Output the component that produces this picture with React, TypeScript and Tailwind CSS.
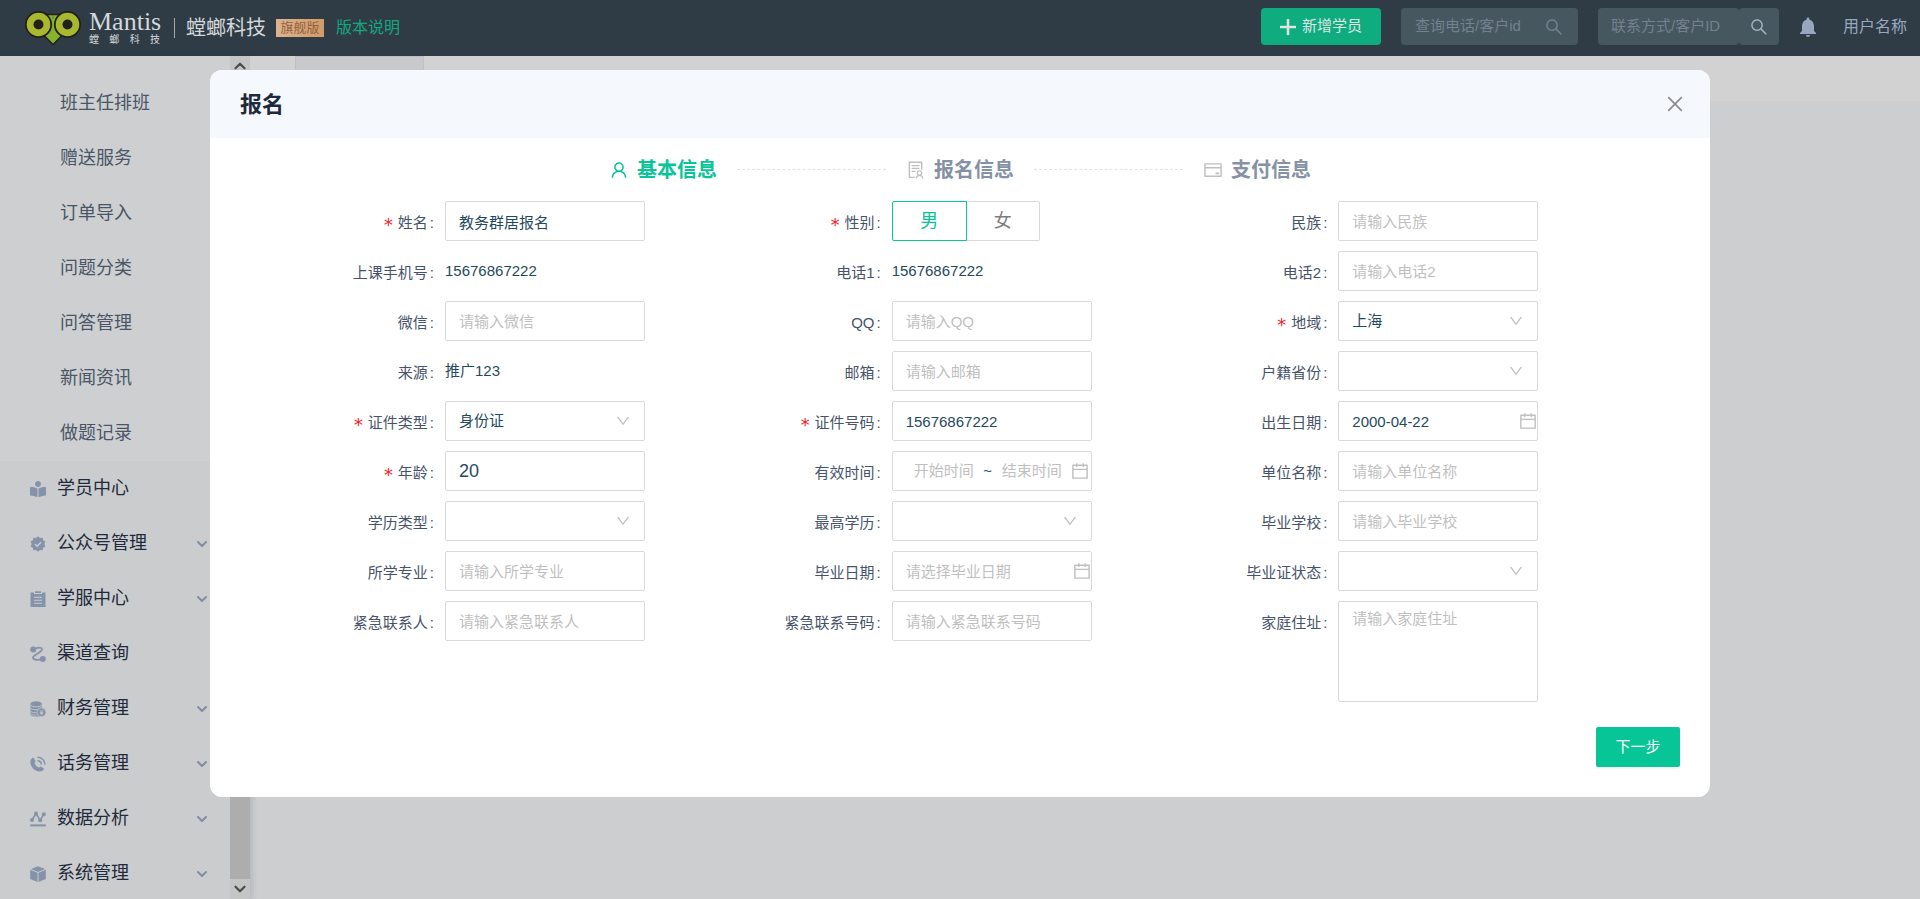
import { useState } from "react";
import type { ReactNode } from "react";
import {
  AiOutlineCalendar,
  AiOutlineClose,
  AiOutlineCreditCard,
  AiOutlineDown,
  AiOutlineSearch,
  AiOutlineSolution,
  AiOutlineUser,
} from "react-icons/ai";
import { FaBookReader } from "react-icons/fa";
import { MdNotifications } from "react-icons/md";
import { ChevronDown } from "lucide-react";

const subMenu = ["班主任排班", "赠送服务", "订单导入", "问题分类", "问答管理", "新闻资讯", "做题记录"];

const mainMenu: { label: string; icon: ReactNode; more: boolean }[] = [
  { label: "学员中心", icon: <FaBookReader className="h-4 w-4" />, more: false },
  { label: "公众号管理", icon: <BadgeIcon />, more: true },
  { label: "学服中心", icon: <ClipboardIcon />, more: true },
  { label: "渠道查询", icon: <RouteIcon />, more: false },
  { label: "财务管理", icon: <CoinsIcon />, more: true },
  { label: "话务管理", icon: <PhoneIcon />, more: true },
  { label: "数据分析", icon: <ChartIcon />, more: true },
  { label: "系统管理", icon: <CubeIcon />, more: true },
];

const boxClass =
  "h-10 w-[200px] rounded-xs border border-[#d9d9d9] bg-white px-[13px] text-[#1f4a5e] outline-none placeholder:text-[#bfbfbf]";

function BadgeIcon() {
  return (
    <svg viewBox="0 0 16 16" className="h-4 w-4" fill="currentColor">
      <path d="M8 .3l2 1.700 2.600-.3.500 2.500 2.300 1.300L14.400 8l1 2.500-2.300 1.300-.5 2.500-2.600-.3L8 15.700 6 14l-2.600.3-.5-2.500L.6 10.500 1.600 8 .6 5.500l2.300-1.300.5-2.500L6 2z" />
      <path d="M5 8l2.200 2.200L11 6.200" fill="none" stroke="#cacccd" strokeWidth="1.500" />
    </svg>
  );
}

function ClipboardIcon() {
  return (
    <svg viewBox="0 0 16 16" className="h-4 w-4" fill="currentColor">
      <path d="M.5 1.500H4V3h8V1.500h3.500V16H.5z" />
      <path d="M5 .3h6v1.700H5z" />
      <path d="M4 6.300h8M4 9.300h8M4 12.300h8" stroke="#cacccd" strokeWidth="1.100" />
    </svg>
  );
}

function RouteIcon() {
  return (
    <svg viewBox="0 0 16 16" className="h-4 w-4" fill="currentColor">
      <circle cx="3.200" cy="3.500" r="3" />
      <circle cx="12.800" cy="13" r="3" />
      <path d="M4 3.200C7 1.200 12 .8 12 3.500S3 9 3 11.500s5 3 9 1.500" fill="none" stroke="currentColor" strokeWidth="1.800" />
    </svg>
  );
}

function CoinsIcon() {
  return (
    <svg viewBox="0 0 16 16" className="h-4 w-4" fill="currentColor">
      <path d="M.5 2.800C.5 1.300 3 .3 6.200.3s5.600 1 5.600 2.500v12c-1 .8-9 1.300-11.300-.6z" />
      <path d="M.5 4.500c2 1.700 9.300 1.700 11.300 0M.5 7.500c2 1.500 7 1.600 8.500.5M.5 10.500c1.500 1.200 5 1.300 6 1M.5 13c1.500 1.200 5 1.300 6 1" fill="none" stroke="#cacccd" strokeWidth=".8" />
      <circle cx="11.500" cy="11.300" r="4.500" stroke="#cacccd" strokeWidth=".8" />
      <path d="M9.700 8.800l1.800 2.300 1.800-2.300M11.500 11v3M9.800 11.400h3.400M9.800 12.700h3.400" fill="none" stroke="#cacccd" strokeWidth=".8" />
    </svg>
  );
}

function PhoneIcon() {
  return (
    <svg viewBox="0 0 16 16" className="h-4 w-4" fill="currentColor">
      <path d="M3.300 1.500L5.600 5 4.500 6.900c.7 2 2.300 3.900 4.500 4.700l1.900-1.100 3.300 2.300c-1 1.900-2.600 2.800-4.600 2.700C4.500 15.200.6 11 .3 6c0-2 1-3.600 3-4.500z" />
      <path d="M7.500 4.700c2.200 0 3.800 1.600 3.800 3.800M7.500 1.200c4.200 0 7.300 3.100 7.300 7.300" fill="none" stroke="currentColor" strokeWidth="1.500" />
    </svg>
  );
}

function ChartIcon() {
  return (
    <svg viewBox="0 0 16 16" className="h-4 w-4" fill="currentColor">
      <path d="M2 9L6 2.500l4.200 6.800L13.800 3" fill="none" stroke="currentColor" strokeWidth="1.600" />
      <circle cx="2" cy="9" r="2" />
      <circle cx="6" cy="2.600" r="2" />
      <circle cx="10.200" cy="9.300" r="2" />
      <circle cx="13.800" cy="3.200" r="2" />
      <path d="M.2 13.400h15.600v2H.2z" />
    </svg>
  );
}

function CubeIcon() {
  return (
    <svg viewBox="0 0 16 16" className="h-4 w-4" fill="currentColor">
      <path d="M8 .2l7 2.800-7 2.900L1 3z" />
      <path d="M.2 3.700l7.300 3v9.200L.2 12.900zM15.800 3.700l-7.300 3v9.200l7.300-3z" />
    </svg>
  );
}

function Logo() {
  return (
    <div className="flex items-center gap-2">
      <svg viewBox="0 0 56 36" className="h-9 w-14">
        <path d="M20.500 4.500h15l-1 15 4 4.500L28 34.500 17.500 24l4-4.500z" fill="#86b32d" stroke="#231f1c" strokeWidth="1.500" />
        <path d="M28 5v4" stroke="#5d8420" strokeWidth="1" />
        <circle cx="13.500" cy="14.500" r="12.700" fill="#a9b92f" stroke="#231f1c" strokeWidth="1.800" />
        <circle cx="42.500" cy="14.500" r="12.700" fill="#a9b92f" stroke="#231f1c" strokeWidth="1.800" />
        <circle cx="13.500" cy="14.500" r="5" fill="#231f1c" />
        <circle cx="42.500" cy="14.500" r="5" fill="#231f1c" />
      </svg>
      <div className="w-[71px] text-[#d5d8da]">
        <div className="font-['Liberation_Serif',serif] text-[26px] leading-6">Mantis</div>
        <div className="flex justify-between text-[10px] leading-3">
          <span>螳</span>
          <span>螂</span>
          <span>科</span>
          <span>技</span>
        </div>
      </div>
    </div>
  );
}

function Header() {
  return (
    <header className="flex h-14 items-center bg-[#2f3c46] pr-[13px] pl-[25px]">
      <Logo />
      <div className="ml-[14px] h-5 w-px bg-[#a3a9ad]" />
      <h1 className="ml-[11px] text-[20px] text-[#d5d8da]">螳螂科技</h1>
      <span className="ml-[10px] h-[18px] w-12 bg-gradient-to-r from-[#dcb391] to-[#d29a68] text-center text-[13px] leading-[18px] text-[#94633a]">
        旗舰版
      </span>
      <a href="#version" className="ml-3 text-[16px] text-[#13a87f]">
        版本说明
      </a>

      <div className="mb-[3px] ml-auto flex items-center text-[15px]">
        <button className="flex h-[37px] w-[120px] items-center justify-center gap-[6px] rounded-sm bg-[#0fac80] text-[#dfe5e3]">
          <svg viewBox="0 0 16 16" className="h-4 w-4">
            <path d="M8 0v16M0 8h16" stroke="currentColor" strokeWidth="2.500" />
          </svg>
          新增学员
        </button>
        <div className="ml-5 flex h-[37px] w-[177px] items-center rounded-sm bg-[#465760] px-[14px]">
          <input
            aria-label="查询电话/客户id"
            placeholder="查询电话/客户id"
            className="min-w-0 flex-1 outline-none placeholder:text-[#74818f]"
          />
          <AiOutlineSearch className="h-5 w-5 text-[#74818f]" />
        </div>
        <div className="ml-5 flex h-[37px] w-[181px]">
          <input
            aria-label="联系方式/客户ID"
            placeholder="联系方式/客户ID"
            className="min-w-0 flex-1 rounded-sm bg-[#465760] pl-[13px] outline-none placeholder:text-[#74818f]"
          />
          <button aria-label="搜索" className="flex w-10 items-center justify-center rounded-sm bg-[#465760] text-[#a3b0bf]">
            <AiOutlineSearch className="h-5 w-5" />
          </button>
        </div>
        <button aria-label="通知" className="ml-[17px] text-[#98a7bf]">
          <MdNotifications className="h-6 w-6" />
        </button>
        <a href="#user" className="ml-[23px] text-[16px] text-[#98a7bf]">
          用户名称
        </a>
      </div>
    </header>
  );
}

function Sidebar() {
  return (
    <aside className="flex w-[250px] shrink-0 bg-[#cacccd] shadow-[2px_0_6px_rgba(0,40,60,0.15)]">
      <nav className="flex-1 overflow-hidden">
        <ul className="bg-[#cdcfd0] pt-5">
          {subMenu.map((item) => (
            <li key={item}>
              <a href="#menu" className="flex h-[55px] items-center pl-[60px] text-[18px] text-[#4a5667]">
                {item}
              </a>
            </li>
          ))}
        </ul>
        <ul>
          {mainMenu.map((item) => (
            <li key={item.label}>
              <a href="#menu" className="flex h-[55px] items-center pr-5 pl-[30px] text-[18px] text-[#1f2a3c]">
                <span className="w-[27px] text-[#8593aa]">{item.icon}</span>
                {item.label}
                {item.more && <ChevronDown className="ml-auto h-4 w-4 text-[#7f8ea3]" strokeWidth={3} />}
              </a>
            </li>
          ))}
        </ul>
      </nav>
      <div className="flex w-5 flex-col items-center bg-[#c4c5c5] text-[#4c4c4c]">
        <ChevronDown className="my-px h-[18px] w-[18px] rotate-180" strokeWidth={3} />
        <div className="w-5 flex-1 bg-[#adadad]" />
        <ChevronDown className="my-px h-[18px] w-[18px]" strokeWidth={3} />
      </div>
    </aside>
  );
}

function Steps() {
  return (
    <ol className="flex h-[63px] items-center justify-center text-[20px] font-bold text-[#8592a6]">
      <li className="flex items-center text-[#07c596]">
        <AiOutlineUser className="mr-2 h-5 w-5" />
        基本信息
      </li>
      <li className="mx-5 w-[149px] border-t border-dashed border-[#e3e3e3]" />
      <li className="flex items-center">
        <AiOutlineSolution className="mr-2 h-5 w-5 text-[#bfbfbf]" />
        报名信息
      </li>
      <li className="mx-5 w-[149px] border-t border-dashed border-[#e3e3e3]" />
      <li className="flex items-center">
        <AiOutlineCreditCard className="mr-2 h-5 w-5 text-[#bfbfbf]" />
        支付信息
      </li>
    </ol>
  );
}

function Field({ id, label, required, children }: { id?: string; label: string; required?: boolean; children: ReactNode }) {
  return (
    <div className="flex items-start">
      <label htmlFor={id} className="flex h-10 w-[155px] items-center justify-end pt-1 pr-[11px] text-[15px] text-[#47536a]">
        {required && (
          <span className="mr-1 pt-1 font-['DejaVu_Sans_Mono',monospace] text-[18px] leading-5 text-[#f5222d]">*</span>
        )}
        {label}
        <span className="ml-[2px]">:</span>
      </label>
      {children}
    </div>
  );
}

function TextField({ id, label, required, value, big }: { id: string; label: string; required?: boolean; value?: string; big?: boolean }) {
  return (
    <Field id={id} label={label} required={required}>
      <input
        id={id}
        defaultValue={value}
        placeholder={"请输入" + label}
        className={boxClass + (big ? " text-[18px]" : " text-[15px]")}
      />
    </Field>
  );
}

function PlainField({ label, value }: { label: string; value: string }) {
  return (
    <Field label={label}>
      <span className="text-[15px] leading-10 text-[#1f4a5e]">{value}</span>
    </Field>
  );
}

function SelectField({ id, label, required, value = "" }: { id: string; label: string; required?: boolean; value?: string }) {
  return (
    <Field id={id} label={label} required={required}>
      <div className="relative">
        <select id={id} defaultValue={value} className={boxClass + " appearance-none text-[15px]"}>
          <option value={value}>{value}</option>
        </select>
        <AiOutlineDown className="pointer-events-none absolute top-3 right-[14px] h-4 w-4 text-[#bfbfbf]" />
      </div>
    </Field>
  );
}

function DateField({ id, label, value, placeholder }: { id: string; label: string; value?: string; placeholder?: string }) {
  return (
    <Field id={id} label={label}>
      <div className="relative">
        <input id={id} defaultValue={value} placeholder={placeholder} className={boxClass + " text-[15px]"} />
        <AiOutlineCalendar className="absolute top-[10px] right-0 h-5 w-5 text-[#bfbfbf]" />
      </div>
    </Field>
  );
}

function GenderField() {
  const [gender, setGender] = useState("男");
  return (
    <Field label="性别" required>
      <div className="flex text-[18px]">
        <button
          type="button"
          onClick={() => setGender("男")}
          className={`h-10 w-[75px] rounded-l-xs border ${gender === "男" ? "border-[#07c596] text-[#07c596]" : "border-[#d9d9d9] text-[#7d7d7d]"}`}
        >
          男
        </button>
        <button
          type="button"
          onClick={() => setGender("女")}
          className={`h-10 w-[73px] rounded-r-xs border ${gender === "女" ? "border-[#07c596] text-[#07c596]" : "border-l-0 border-[#d9d9d9] text-[#7d7d7d]"}`}
        >
          女
        </button>
      </div>
    </Field>
  );
}

function RangeField() {
  return (
    <Field id="validFrom" label="有效时间">
      <div className="flex h-10 w-[200px] items-center rounded-xs border border-[#d9d9d9] pl-[13px] text-[15px] text-[#1f4a5e]">
        <input id="validFrom" placeholder="开始时间" className="w-[76px] text-center outline-none placeholder:text-[#bfbfbf]" />
        <span className="w-3 text-center">~</span>
        <input aria-label="结束时间" placeholder="结束时间" className="w-[76px] text-center outline-none placeholder:text-[#bfbfbf]" />
        <AiOutlineCalendar className="h-5 w-5 shrink-0 text-[#bfbfbf]" />
      </div>
    </Field>
  );
}

function SignUpModal() {
  return (
    <div role="dialog" aria-labelledby="modalTitle" className="mx-auto w-full max-w-[1500px] overflow-hidden rounded-xl bg-white">
      <div className="flex h-[68px] items-center justify-between bg-[#f5f9fe] pr-6 pl-[30px]">
        <h2 id="modalTitle" className="text-[22px] font-bold text-[#1f2a3c]">
          报名
        </h2>
        <button aria-label="关闭" className="text-[#8c8c8c]">
          <AiOutlineClose className="h-[22px] w-[22px]" />
        </button>
      </div>

      <Steps />

      <form className="px-20">
        <div className="grid grid-cols-3 gap-y-[10px]">
          <TextField id="name" label="姓名" required value="教务群居报名" />
          <GenderField />
          <TextField id="nation" label="民族" />

          <PlainField label="上课手机号" value="15676867222" />
          <PlainField label="电话1" value="15676867222" />
          <TextField id="phone2" label="电话2" />

          <TextField id="wechat" label="微信" />
          <TextField id="qq" label="QQ" />
          <SelectField id="area" label="地域" required value="上海" />

          <PlainField label="来源" value="推广123" />
          <TextField id="email" label="邮箱" />
          <SelectField id="province" label="户籍省份" />

          <SelectField id="cardType" label="证件类型" required value="身份证" />
          <TextField id="cardNo" label="证件号码" required value="15676867222" />
          <DateField id="birthday" label="出生日期" value="2000-04-22" />

          <TextField id="age" label="年龄" required value="20" big />
          <RangeField />
          <TextField id="company" label="单位名称" />

          <SelectField id="eduType" label="学历类型" />
          <SelectField id="eduTop" label="最高学历" />
          <TextField id="school" label="毕业学校" />

          <TextField id="major" label="所学专业" />
          <DateField id="graduation" label="毕业日期" placeholder="请选择毕业日期" />
          <SelectField id="diploma" label="毕业证状态" />

          <TextField id="contact" label="紧急联系人" />
          <TextField id="contactNo" label="紧急联系号码" />
          <Field id="address" label="家庭住址">
            <textarea
              id="address"
              placeholder="请输入家庭住址"
              className="h-[101px] w-[200px] resize-none rounded-xs border border-[#d9d9d9] px-[13px] py-[6px] text-[15px] outline-none placeholder:text-[#bfbfbf]"
            />
          </Field>
        </div>
      </form>

      <div className="flex justify-end px-[30px] pt-[25px] pb-[30px]">
        <button className="h-10 w-[84px] rounded-xs bg-[#07c596] text-[15px] text-white shadow-[0_2px_0_rgba(0,0,0,0.045)]">
          下一步
        </button>
      </div>
    </div>
  );
}

export default function App() {
  return (
    <div className="relative flex h-screen flex-col overflow-hidden bg-[#cdced0] font-['Liberation_Sans','Noto_Sans_CJK_SC',sans-serif]">
      <Header />
      <div className="flex min-h-0 flex-1">
        <Sidebar />
        <main className="flex-1">
          <div className="flex h-[45px] bg-[#d2d2d2] pl-[45px]">
            <div className="w-[129px] border border-[#bfc0c2] bg-[#c8c9cd]" />
          </div>
        </main>
      </div>
      <div className="absolute inset-x-0 top-[70px]">
        <SignUpModal />
      </div>
    </div>
  );
}
